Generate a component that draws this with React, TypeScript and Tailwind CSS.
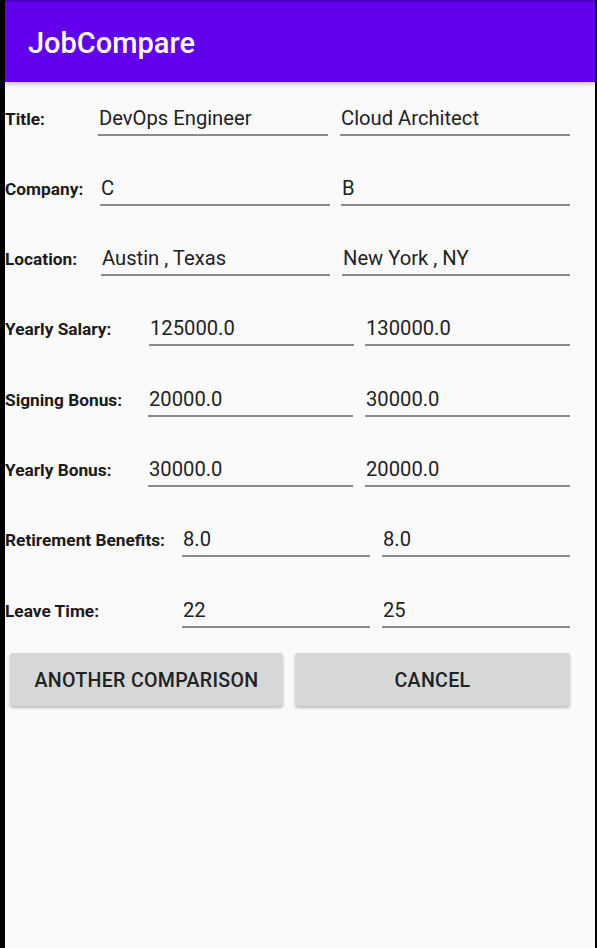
import React from "react";

type Row = {
  label: string;
  start: number; // x of field1 start in page coords
  w1: number;
  s2: number;
  v1: string;
  v2: string;
};

const rows: Row[] = [
  { label: "Title:", start: 98, w1: 230, s2: 340, v1: "DevOps Engineer", v2: "Cloud Architect" },
  { label: "Company:", start: 100, w1: 230, s2: 341, v1: "C", v2: "B" },
  { label: "Location:", start: 101, w1: 229, s2: 342, v1: "Austin , Texas", v2: "New York , NY" },
  { label: "Yearly Salary:", start: 149, w1: 205, s2: 365, v1: "125000.0", v2: "130000.0" },
  { label: "Signing Bonus:", start: 148, w1: 205, s2: 365, v1: "20000.0", v2: "30000.0" },
  { label: "Yearly Bonus:", start: 148, w1: 205, s2: 365, v1: "30000.0", v2: "20000.0" },
  { label: "Retirement Benefits:", start: 182, w1: 188, s2: 382, v1: "8.0", v2: "8.0" },
  { label: "Leave Time:", start: 182, w1: 188, s2: 382, v1: "22", v2: "25" },
];

function Field({ value, width }: { value: string; width: number }) {
  return (
    <div
      className="shrink-0 text-[20.2px] leading-[24px] text-[#222222] pl-[1px] pb-[4px] border-b-2 border-[#8a8a8a] whitespace-nowrap"
      style={{ width }}
    >
      {value}
    </div>
  );
}

export default function App() {
  return (
    <div
      className="w-[597px] h-[948px] bg-black flex"
      style={{ fontFamily: "Roboto, 'Noto Sans', sans-serif" }}
    >
      <div className="ml-[5px] w-[590px] h-full bg-[#fafafa] flex flex-col">
        <div className="relative z-10 shadow-[0_2px_4px_rgba(0,0,0,0.25)]">
          <div className="h-[2px] bg-[#4a00c4]" />
          <div className="h-[80px] bg-[#6200ee] flex items-center pl-[23px] pt-[4px]">
            <span className="text-white text-[29px] font-medium">JobCompare</span>
          </div>
        </div>
        {rows.map((r) => (
          <div key={r.label} className="h-[70.3px] pt-[23.5px] flex items-baseline">
            <div
              className="shrink-0 text-[17.3px] font-bold text-[#1a1a1a] whitespace-nowrap"
              style={{ width: r.start - 5 }}
            >
              {r.label}
            </div>
            <Field value={r.v1} width={r.w1} />
            <div className="shrink-0" style={{ width: r.s2 - r.start - r.w1 }} />
            <Field value={r.v2} width={570 - r.s2} />
          </div>
        ))}
        <div className="mt-[9px] flex pl-[5px] gap-[12px]">
          <button className="w-[273px] h-[53px] pt-[2px] rounded-[3px] bg-[#d6d7d7] shadow-[0_2px_3px_rgba(0,0,0,0.25)] text-[19.6px] font-medium text-[#222222] tracking-[0.3px]">
            ANOTHER COMPARISON
          </button>
          <button className="w-[275px] h-[53px] pt-[2px] rounded-[3px] bg-[#d6d7d7] shadow-[0_2px_3px_rgba(0,0,0,0.25)] text-[19.6px] font-medium text-[#222222] tracking-[0.3px]">
            CANCEL
          </button>
        </div>
      </div>
    </div>
  );
}
